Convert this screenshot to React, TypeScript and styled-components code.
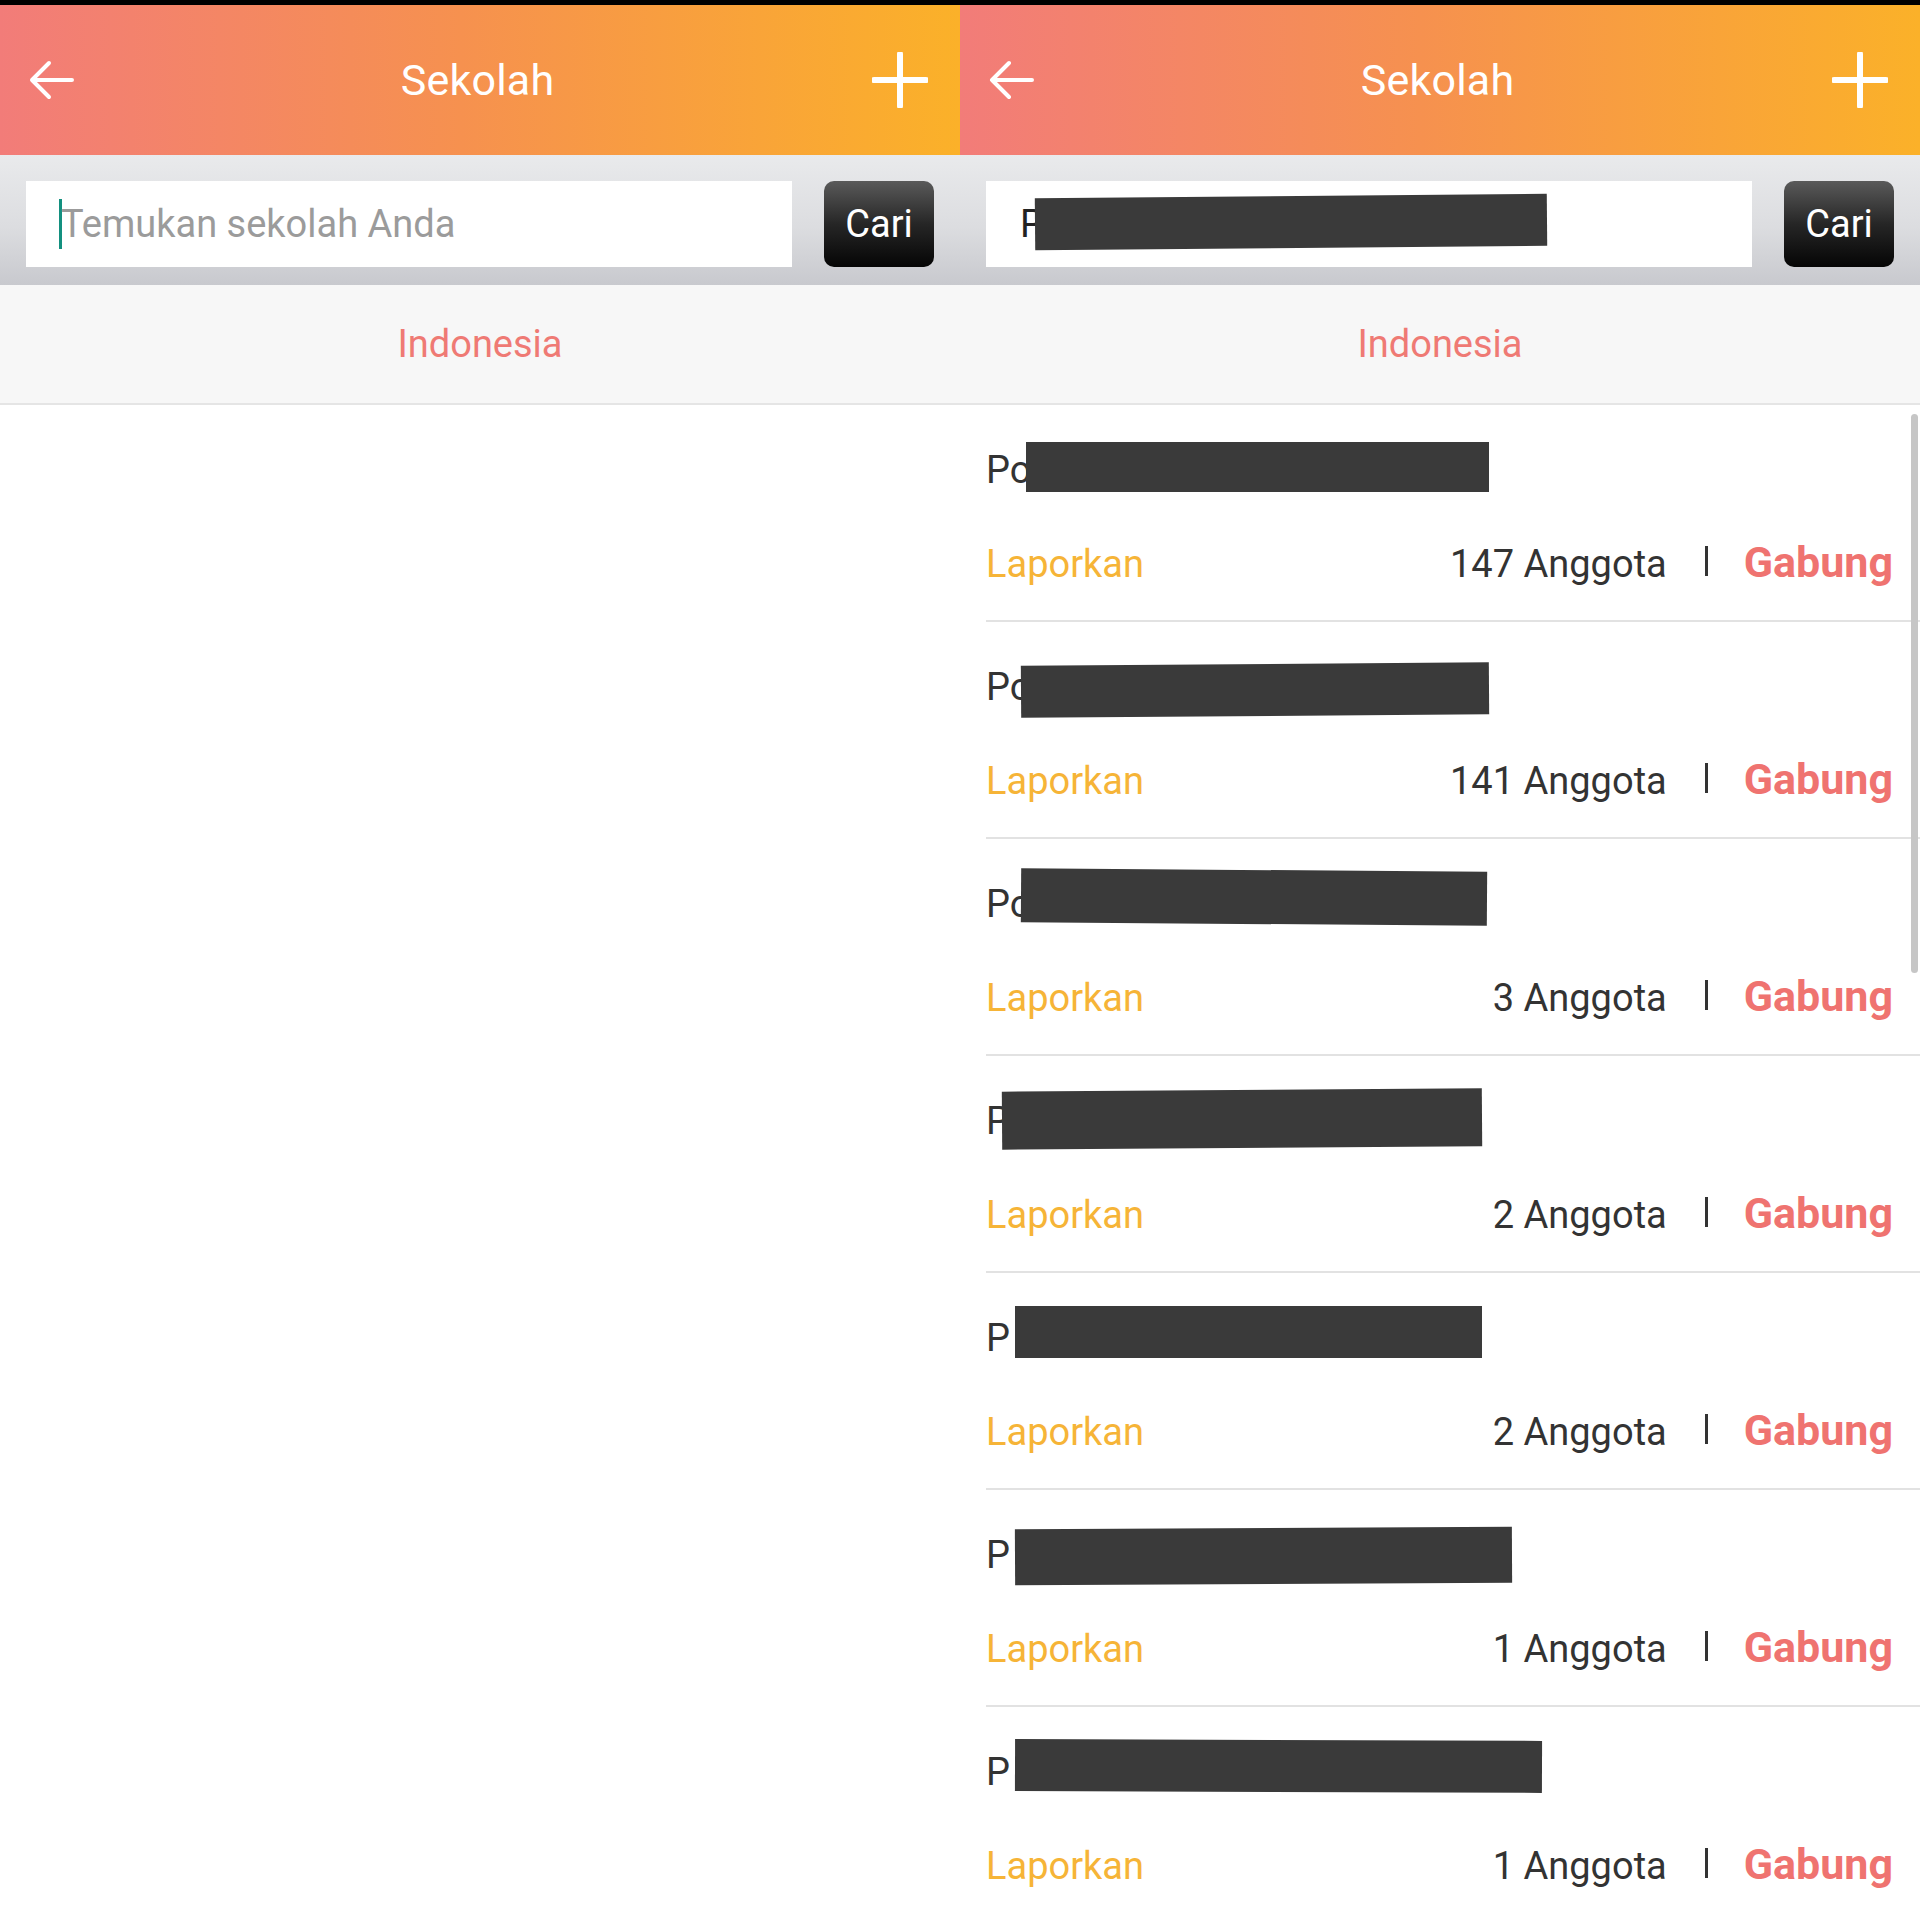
import React from 'react';
import styled, { createGlobalStyle } from 'styled-components';

const GlobalStyle = createGlobalStyle`
  html, body {
    margin:0;
    padding:0;
    background:#fff;
  }
  body {
    font-family:Roboto, "Noto Sans", Arial, sans-serif;
  }
`;

const Page = styled.div`
  display:grid;
  grid-template-columns:960px 960px;
  grid-template-rows:5px auto;
  width:1920px;
  height:1920px;
  overflow:hidden;
  background:#fff;
`;

const StatusStrip = styled.div`
  grid-column:1 / span 2;
  background:#000;
`;

const Panel = styled.section`
  display:flex;
  flex-direction:column;
  min-height:0;
`;

const Header = styled.header`
  flex-shrink:0;
  display:grid;
  grid-template-columns:1fr auto 1fr;
  align-items:center;
  height:150px;
  padding:0 32px 0 27px;
  box-sizing:border-box;
  background:linear-gradient(90deg, #f27c79 0%, #f6914f 48%, #fbb129 100%);
`;

const IconButton = styled.button<{ $end?: boolean }>`
  display:flex;
  align-items:center;
  justify-content:center;
  justify-self:${p => (p.$end ? 'end' : 'start')};
  padding:0;
  margin:0;
  border:none;
  background:none;
  cursor:pointer;
`;

const Title = styled.h1`
  margin:0;
  font-size:43px;
  font-weight:400;
  color:#fff;
  letter-spacing:0.2px;
`;

const SearchBar = styled.div`
  flex-shrink:0;
  display:flex;
  align-items:center;
  gap:32px;
  height:130px;
  padding:26px 26px 18px 26px;
  box-sizing:border-box;
  background:linear-gradient(180deg, #e9eaec 0%, #dcdde0 55%, #c8c9ce 100%);
`;

const SearchField = styled.div`
  position:relative;
  flex:1;
  display:flex;
  align-items:center;
  height:86px;
  padding-left:33px;
  box-sizing:border-box;
  background:#fff;
  font-size:38px;
`;

const Caret = styled.span`
  display:block;
  width:3px;
  height:50px;
  background:#13907f;
  margin-right:-1px;
`;

const Placeholder = styled.span`
  color:#9b9b9b;
`;

const Typed = styled.span`
  color:#222;
  padding-left:1px;
`;

const Redaction = styled.span<{ $left: number; $top: number; $width: number; $height: number; $tilt: number }>`
  position:absolute;
  left:${p => p.$left}px;
  top:${p => p.$top}px;
  width:${p => p.$width}px;
  height:${p => p.$height}px;
  background:#3a3a3a;
  transform:rotate(${p => p.$tilt}deg);
`;

const SearchButton = styled.button`
  width:110px;
  height:86px;
  border:none;
  border-radius:10px;
  background:linear-gradient(180deg, #5a5a5a 0%, #262626 50%, #050505 100%);
  color:#fff;
  font-family:Roboto, Arial, sans-serif;
  font-size:38px;
  padding:0;
  cursor:pointer;
`;

const RegionTab = styled.div`
  flex-shrink:0;
  display:flex;
  align-items:center;
  justify-content:center;
  height:120px;
  box-sizing:border-box;
  background:#f7f7f7;
  border-bottom:2px solid #e5e5e5;
  color:#ef7a74;
  font-size:38px;
`;

const List = styled.div`
  position:relative;
  flex:1;
  padding-left:26px;
  background:#fff;
`;

const Item = styled.div`
  position:relative;
  display:flex;
  flex-direction:column;
  gap:44px;
  padding:40px 27px 31px 0;
  border-bottom:2px solid #e2e2e2;
`;

const Name = styled.div`
  height:50px;
  line-height:50px;
  font-size:38px;
  color:#333;
`;

const Actions = styled.div`
  display:flex;
  align-items:center;
  height:50px;
  line-height:50px;
  font-size:38px;
`;

const Report = styled.span`
  color:#f6b437;
`;

const Members = styled.span`
  margin-left:auto;
  color:#333;
`;

const Separator = styled.span`
  display:block;
  width:3px;
  height:30px;
  margin:-6px 36px 0 38px;
  background:#333;
`;

const Join = styled.span`
  color:#ef7370;
  font-weight:700;
  font-size:43px;
  margin-top:-4px;
`;

const Scrollbar = styled.div`
  position:absolute;
  right:2px;
  top:9px;
  width:7px;
  height:559px;
  border-radius:4px;
  background:#c6c6c6;
`;

const BackIcon = () => (
  <svg width="48" height="48" viewBox="0 0 48 48" fill="none">
    <path d="M45 24H5M22 7L5 24l17 17" stroke="#fff" strokeWidth="4" strokeLinecap="round" strokeLinejoin="round" />
  </svg>
);

const PlusIcon = () => (
  <svg width="56" height="56" viewBox="0 0 56 56" fill="none">
    <path d="M28 2v52M2 28h52" stroke="#fff" strokeWidth="6" strokeLinecap="round" />
  </svg>
);

const schools = [
  { prefix: 'Po', members: 147, box: { left: 40, top: 37, width: 463, height: 50, tilt: 0 } },
  { prefix: 'Po', members: 141, box: { left: 35, top: 42, width: 468, height: 52, tilt: -0.4 } },
  { prefix: 'Po', members: 3, box: { left: 35, top: 31, width: 466, height: 54, tilt: 0.4 } },
  { prefix: 'P', members: 2, box: { left: 16, top: 34, width: 480, height: 58, tilt: -0.4 } },
  { prefix: 'P', members: 2, box: { left: 29, top: 33, width: 467, height: 52, tilt: 0 } },
  { prefix: 'P', members: 1, box: { left: 29, top: 38, width: 497, height: 56, tilt: -0.3 } },
  { prefix: 'P', members: 1, box: { left: 29, top: 33, width: 527, height: 52, tilt: 0.2 } },
];

function TopBar() {
  return (
    <Header>
      <IconButton aria-label="Kembali"><BackIcon /></IconButton>
      <Title>Sekolah</Title>
      <IconButton $end aria-label="Tambah"><PlusIcon /></IconButton>
    </Header>
  );
}

function App() {
  return (
    <>
      <GlobalStyle />
      <Page>
        <StatusStrip />

        <Panel>
          <TopBar />
          <SearchBar>
            <SearchField>
              <Caret />
              <Placeholder>Temukan sekolah Anda</Placeholder>
            </SearchField>
            <SearchButton>Cari</SearchButton>
          </SearchBar>
          <RegionTab>Indonesia</RegionTab>
          <List />
        </Panel>

        <Panel>
          <TopBar />
          <SearchBar>
            <SearchField>
              <Typed>P</Typed>
              <Redaction $left={49} $top={15} $width={512} $height={52} $tilt={-0.5} />
            </SearchField>
            <SearchButton>Cari</SearchButton>
          </SearchBar>
          <RegionTab>Indonesia</RegionTab>
          <List>
            {schools.map((s, i) => (
              <Item key={i}>
                <Name>{s.prefix}</Name>
                <Redaction $left={s.box.left} $top={s.box.top} $width={s.box.width} $height={s.box.height} $tilt={s.box.tilt} />
                <Actions>
                  <Report>Laporkan</Report>
                  <Members>{s.members} Anggota</Members>
                  <Separator />
                  <Join>Gabung</Join>
                </Actions>
              </Item>
            ))}
            <Scrollbar />
          </List>
        </Panel>
      </Page>
    </>
  );
}

export default App;
